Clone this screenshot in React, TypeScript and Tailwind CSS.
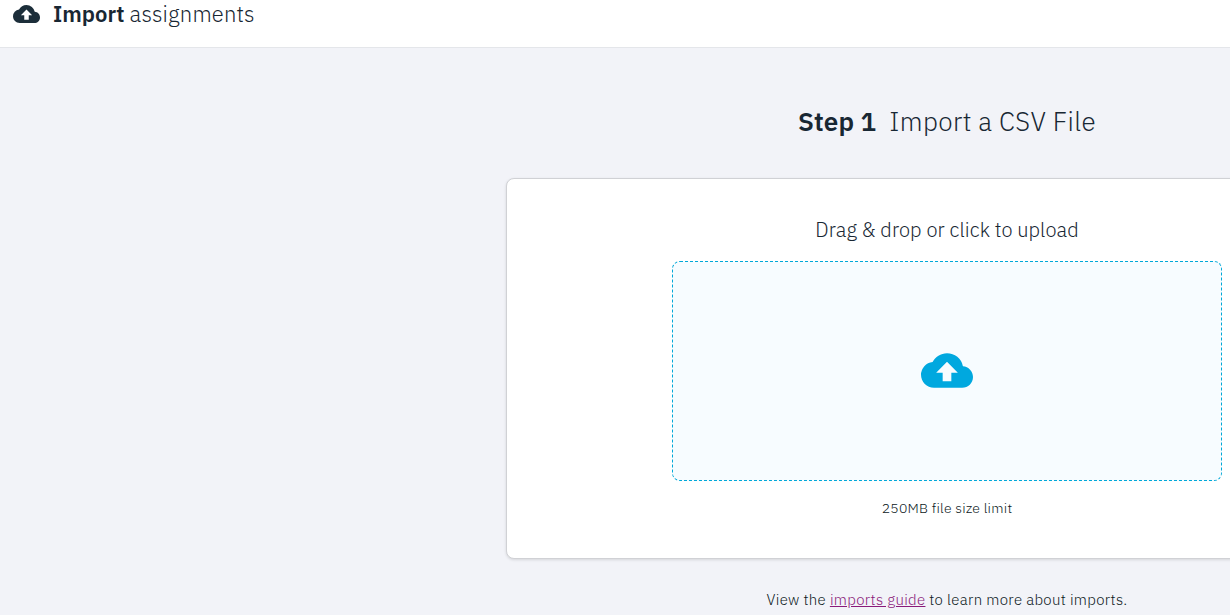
import React from 'react';
import { MdBackup } from 'react-icons/md';

export default function App() {
  return (
    <div className="h-[615px] w-[1230px] overflow-hidden bg-[#f2f3f8] font-['IBM_Plex_Sans','Open_Sans',sans-serif] font-light text-[#182733]">
      <header className="flex h-12 items-start border-b border-[#e4e6ea] bg-white pl-[13px]">
        <MdBackup className="h-7 w-[27px] text-[#1c2e3a]" />
        <h1 className="ml-[13px] text-[22px] leading-7"><b className="font-semibold">Import</b> <span className="tracking-[0.17px]">assignments</span></h1>
      </header>
      <main className="ml-[506px] flex w-[882px] flex-col items-center">
        <h2 className="mt-[53px] text-[26px] leading-10"><b className="font-semibold tracking-[0.15px]">Step 1</b><span className="tracking-[0.37px]">&nbsp; Import a CSV File</span></h2>
        <section className="mt-[37px] flex h-[381px] w-full flex-col items-center rounded-lg border border-[#d0d1d5] bg-white shadow-[0_1px_3px_rgba(0,0,0,0.12)]">
          <p className="mt-9 text-[20px] leading-[30px] tracking-[0.05px]">Drag &amp; drop or click to upload</p>
          <div className="mt-4 flex h-[220px] w-[550px] items-center justify-center rounded-lg border border-dashed border-[#00a8d8] bg-[#f7fcff]">
            <MdBackup className="h-[52px] w-[52px] -translate-y-[0.5px] text-[#00a8df]" />
          </div>
          <p className="mt-[15px] text-[14px] leading-6 tracking-[0.24px] text-[#0c1822]">250MB file size limit</p>
        </section>
        <p className="mt-[29px] text-[15px] leading-6 tracking-[0.31px] text-[#0c1822]">View the <a className="text-[#8a1a7a] underline">imports guide</a> to learn more about imports.</p>
      </main>
    </div>
  );
}
